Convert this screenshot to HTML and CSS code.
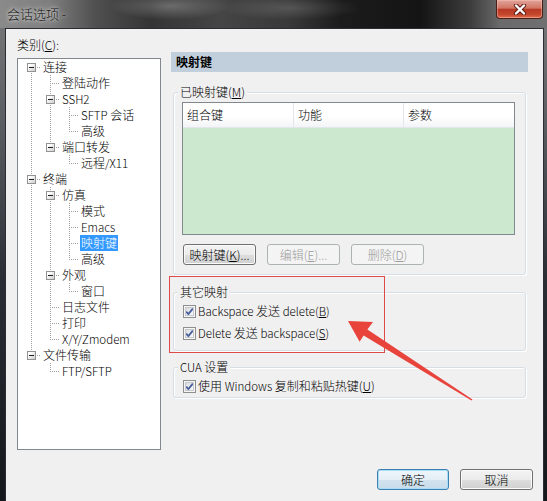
FILE: index.html
```html
<!DOCTYPE html>
<html>
<head>
<meta charset="utf-8">
<title>会话选项</title>
<link rel="stylesheet" href="styles.css">
</head>
<body>
<div class="window">
  <div class="titlebar">
    <span class="title">会话选项 -</span>
    <div class="close">
      <svg width="14" height="11" viewBox="0 0 14 11">
        <path d="M3 1.5 L11 9.5 M11 1.5 L3 9.5" stroke="#5a1a10" stroke-width="4.2" stroke-linecap="round"/>
        <path d="M3 1.5 L11 9.5 M11 1.5 L3 9.5" stroke="#ffffff" stroke-width="2.4" stroke-linecap="round"/>
      </svg>
    </div>
  </div>
  <div class="client">
    <div class="main">
      <div class="left">
        <div class="lbl">类别(<u>C</u>):</div>
        <div class="tree">
          <div class="row"><i class="c first"><b class="box"></b></i><span class="t">连接</span></div>
          <div class="row"><i class="c v"></i><i class="c tee"></i><span class="t">登陆动作</span></div>
          <div class="row"><i class="c v"></i><i class="c tee"><b class="box"></b></i><span class="t en">SSH2</span></div>
          <div class="row"><i class="c v"></i><i class="c v"></i><i class="c tee"></i><span class="t"><span class="en">SFTP</span> 会话</span></div>
          <div class="row"><i class="c v"></i><i class="c v"></i><i class="c end"></i><span class="t">高级</span></div>
          <div class="row"><i class="c v"></i><i class="c end"><b class="box"></b></i><span class="t">端口转发</span></div>
          <div class="row"><i class="c v"></i><i class="c"></i><i class="c end"></i><span class="t">远程<span class="en">/X11</span></span></div>
          <div class="row"><i class="c tee"><b class="box"></b></i><span class="t">终端</span></div>
          <div class="row"><i class="c v"></i><i class="c tee"><b class="box"></b></i><span class="t">仿真</span></div>
          <div class="row"><i class="c v"></i><i class="c v"></i><i class="c tee"></i><span class="t">模式</span></div>
          <div class="row"><i class="c v"></i><i class="c v"></i><i class="c tee"></i><span class="t en">Emacs</span></div>
          <div class="row"><i class="c v"></i><i class="c v"></i><i class="c tee"></i><span class="t sel">映射键</span></div>
          <div class="row"><i class="c v"></i><i class="c v"></i><i class="c end"></i><span class="t">高级</span></div>
          <div class="row"><i class="c v"></i><i class="c tee"><b class="box"></b></i><span class="t">外观</span></div>
          <div class="row"><i class="c v"></i><i class="c v"></i><i class="c end"></i><span class="t">窗口</span></div>
          <div class="row"><i class="c v"></i><i class="c tee"></i><span class="t">日志文件</span></div>
          <div class="row"><i class="c v"></i><i class="c tee"></i><span class="t">打印</span></div>
          <div class="row"><i class="c v"></i><i class="c end"></i><span class="t en">X/Y/Zmodem</span></div>
          <div class="row"><i class="c end"><b class="box"></b></i><span class="t">文件传输</span></div>
          <div class="row"><i class="c"></i><i class="c end"></i><span class="t en">FTP/SFTP</span></div>
        </div>
      </div>
      <div class="right">
        <div class="header">映射键</div>
        <div class="group g1">
          <div class="gtitle">已映射键(<u>M</u>)</div>
          <div class="list">
            <div class="lhead">
              <div class="col col1">组合键</div>
              <div class="col col2">功能</div>
              <div class="col col3">参数</div>
            </div>
            <div class="lbody"></div>
          </div>
          <div class="btns">
            <button class="btn">映射键(<u>K</u>)...</button>
            <button class="btn dis">编辑(<u>E</u>)...</button>
            <button class="btn dis">删除(<u>D</u>)</button>
          </div>
        </div>
        <div class="group g2">
          <div class="gtitle">其它映射</div>
          <div class="chk">
            <span class="cb"><svg width="9" height="9" viewBox="0 0 9 9"><path d="M1.2 4.6 L3.4 7 L7.8 1.6" fill="none" stroke="#4a5f9c" stroke-width="1.8"/></svg></span>
            <span class="ctext"><span class="en">Backspace</span> 发送 <span class="en">delete(<u>B</u>)</span></span>
          </div>
          <div class="chk">
            <span class="cb"><svg width="9" height="9" viewBox="0 0 9 9"><path d="M1.2 4.6 L3.4 7 L7.8 1.6" fill="none" stroke="#4a5f9c" stroke-width="1.8"/></svg></span>
            <span class="ctext"><span class="en">Delete</span> 发送 <span class="en">backspace(<u>S</u>)</span></span>
          </div>
        </div>
        <div class="group g3">
          <div class="gtitle"><span class="en">CUA</span> 设置</div>
          <div class="chk">
            <span class="cb"><svg width="9" height="9" viewBox="0 0 9 9"><path d="M1.2 4.6 L3.4 7 L7.8 1.6" fill="none" stroke="#4a5f9c" stroke-width="1.8"/></svg></span>
            <span class="ctext">使用 <span class="en">Windows</span> 复制和粘贴热键(<u>U</u>)</span>
          </div>
        </div>
      </div>
    </div>
    <div class="footer">
      <button class="btn def ok">确定</button>
      <button class="btn cancel">取消</button>
    </div>
  </div>
</div>
<div class="redbox"></div>
<svg class="arrow" width="547" height="501" viewBox="0 0 547 501">
  <polygon points="348,321 373,322 367.4,329.5 472.5,399.5 471.5,400.5 363.6,335.5 359.6,341.8" fill="#e8443c"/>
</svg>
</body>
</html>
```

FILE: styles.css
```css
* { box-sizing: border-box; }
html, body { margin: 0; padding: 0; }
body {
  width: 547px;
  height: 501px;
  overflow: hidden;
  position: relative;
  font: 300 12px/16px "Noto Sans CJK SC", "Liberation Sans", sans-serif;
  color: #000;
  background: #1b1f24;
}
u { text-decoration: underline; text-underline-offset: 1px; }
.en { font: 300 11.5px/16px "Noto Sans CJK SC", "Liberation Sans", sans-serif; }

.window {
  height: 501px;
  display: flex;
  flex-direction: column;
  background: linear-gradient(to bottom, #7a7a7a 0, #5b5e63 120px, #2a2e34 280px, #14181d 501px);
}

.titlebar {
  height: 28px;
  flex: none;
  display: flex;
  justify-content: space-between;
  align-items: flex-start;
  background:
    radial-gradient(ellipse 60px 14px at 170px 6px, rgba(200,200,200,.35), transparent),
    radial-gradient(ellipse 70px 12px at 290px 8px, rgba(170,170,170,.25), transparent),
    linear-gradient(to right, #8a8a8a 0, #7e7e7e 50px, #505050 95px, #343434 150px, #454545 220px, #383838 290px, #1c1c1c 340px, #141414 420px, #3c3c3c 470px, #6a6a6a 500px, #707070 547px);
}
.title {
  padding-left: 7px;
  line-height: 28px;
  font-size: 13px;
  color: #111;
  text-shadow: 0 0 6px rgba(255,255,255,.85), 0 0 3px rgba(255,255,255,.7);
}
.close {
  width: 47px;
  height: 19px;
  margin-right: 4px;
  border: 1px solid #4a1f18;
  border-top: none;
  border-radius: 0 0 4px 4px;
  background: linear-gradient(to bottom, #e1a59a 0, #d27564 45%, #b83a25 52%, #c4452c 80%, #e0704c 100%);
  box-shadow: inset 0 0 0 1px rgba(255,200,190,.45);
  display: flex;
  align-items: center;
  justify-content: center;
}

.client {
  flex: 1;
  margin: 0 3px 0 5px;
  border: 1px solid #2a2d31;
  border-bottom: none;
  background: #f0f0f0;
}

.main {
  display: grid;
  grid-template-columns: 144px 357px;
  column-gap: 10px;
  padding: 8px 0 0 11px;
}

.left { display: flex; flex-direction: column; }
.lbl { height: 16px; line-height: 16px; margin-bottom: 5px; }
.tree {
  height: 392px;
  border: 1px solid #828790;
  background: #fff;
  padding-left: 4px;
}
.row { display: flex; height: 16px; }
.c {
  width: 19px;
  height: 16px;
  flex: none;
  position: relative;
}
.c.v::before, .c.tee::before, .c.end::before, .c.first::before {
  content: "";
  position: absolute;
  left: 9px;
  top: 0;
  width: 1px;
  height: 16px;
  background: repeating-linear-gradient(to bottom, #a0a0a0 0 1px, transparent 1px 2px);
}
.c.end::before { height: 9px; }
.c.first::before { top: 8px; height: 8px; }
.c.tee::after, .c.end::after, .c.first::after {
  content: "";
  position: absolute;
  left: 10px;
  top: 8px;
  width: 9px;
  height: 1px;
  background: repeating-linear-gradient(to right, transparent 0 1px, #a0a0a0 1px 2px);
}
.box {
  position: absolute;
  left: 5px;
  top: 4px;
  width: 9px;
  height: 9px;
  border: 1px solid #929292;
  background: linear-gradient(135deg, #ffffff 20%, #cfcfcf 100%);
  z-index: 1;
}
.box::after {
  content: "";
  position: absolute;
  left: 1px;
  top: 3px;
  width: 5px;
  height: 1px;
  background: #1e1e1e;
}
.t {
  margin-left: 1px;
  padding: 0 1px;
  line-height: 16px;
  height: 16px;
  white-space: nowrap;
}
.t.sel { background: #3399ff; color: #fff; }

.right { padding-top: 15px; }
.header {
  height: 20px;
  line-height: 20px;
  padding-left: 5px;
  background: #c1cfdc;
  font-weight: 700;
}

.group {
  margin: 0 2px;
  border: 1px solid #d5dfe5;
  border-radius: 3px;
  box-shadow: inset 1px 1px 0 #fff, 1px 1px 0 #fff;
  padding: 0 10px 9px 8px;
}
.gtitle {
  width: fit-content;
  margin: -9px 0 0 -4px;
  padding: 0 2px;
  height: 16px;
  line-height: 16px;
  background: #f0f0f0;
}
.g1 { margin-top: 20px; }
.g2 { margin-top: 17px; padding-bottom: 9px; }
.g3 { margin-top: 16px; padding-bottom: 3px; }

.list {
  margin-top: 2px;
  width: 333px;
  height: 133px;
  border: 1px solid #828790;
  display: flex;
  flex-direction: column;
}
.lhead {
  height: 25px;
  flex: none;
  display: flex;
  background: linear-gradient(to bottom, #ffffff 0, #ffffff 55%, #f3f4f6 100%);
  border-bottom: 1px solid #e3e6ea;
}
.col {
  line-height: 24px;
  padding-left: 4px;
  border-right: 1px solid #e3e6ea;
}
.col1 { width: 111px; }
.col2 { width: 110px; }
.col3 { flex: 1; border-right: none; }
.lbody { flex: 1; background: #cce8cf; }

.btns { display: flex; gap: 11px; margin: 9px 0 0 1px; }
.btn {
  width: 73px;
  height: 21px;
  padding: 0;
  border: 1px solid #707070;
  border-radius: 3px;
  background: linear-gradient(to bottom, #f3f3f3 0, #ebebeb 50%, #dedede 50%, #d0d0d0 100%);
  box-shadow: inset 0 0 0 1px #fbfbfb;
  font: 300 12px/19px "Noto Sans CJK SC", "Liberation Sans", sans-serif;
  color: #000;
}
.btn.dis {
  border-color: #adb2b5;
  background: #f4f4f4;
  box-shadow: none;
  color: #9a9a9a;
}
.btn.def {
  border-color: #3c7fb1;
  background: linear-gradient(to bottom, #eef6fb 0, #e4eef5 50%, #d3e3ee 50%, #c7dbe9 100%);
  box-shadow: inset 0 0 0 1px #a9dcf6;
}

.chk { display: flex; align-items: center; height: 16px; margin: 3px 0 0 1px; }
.chk + .chk { margin-top: 6px; }
.cb {
  width: 13px;
  height: 13px;
  border: 1px solid #8e8f8f;
  padding: 1px;
  background: #f6f6f6;
  display: flex;
  flex: none;
}
.cb svg {
  width: 9px;
  height: 9px;
  background: linear-gradient(135deg, #d5d8dc 0, #eef0f2 60%, #fbfbfb 100%);
  outline: 1px solid #c5c9ce;
  outline-offset: -1px;
}
.ctext { margin-left: 2px; white-space: nowrap; }

.footer {
  display: flex;
  justify-content: flex-end;
  gap: 11px;
  margin-top: 19px;
  padding-right: 10px;
}
.btn.ok { width: 72px; }

.redbox {
  position: absolute;
  left: 169px;
  top: 276px;
  width: 216px;
  height: 77px;
  border: 1px solid #de4a4a;
}
.arrow {
  position: absolute;
  left: 0;
  top: 0;
  pointer-events: none;
}
```
